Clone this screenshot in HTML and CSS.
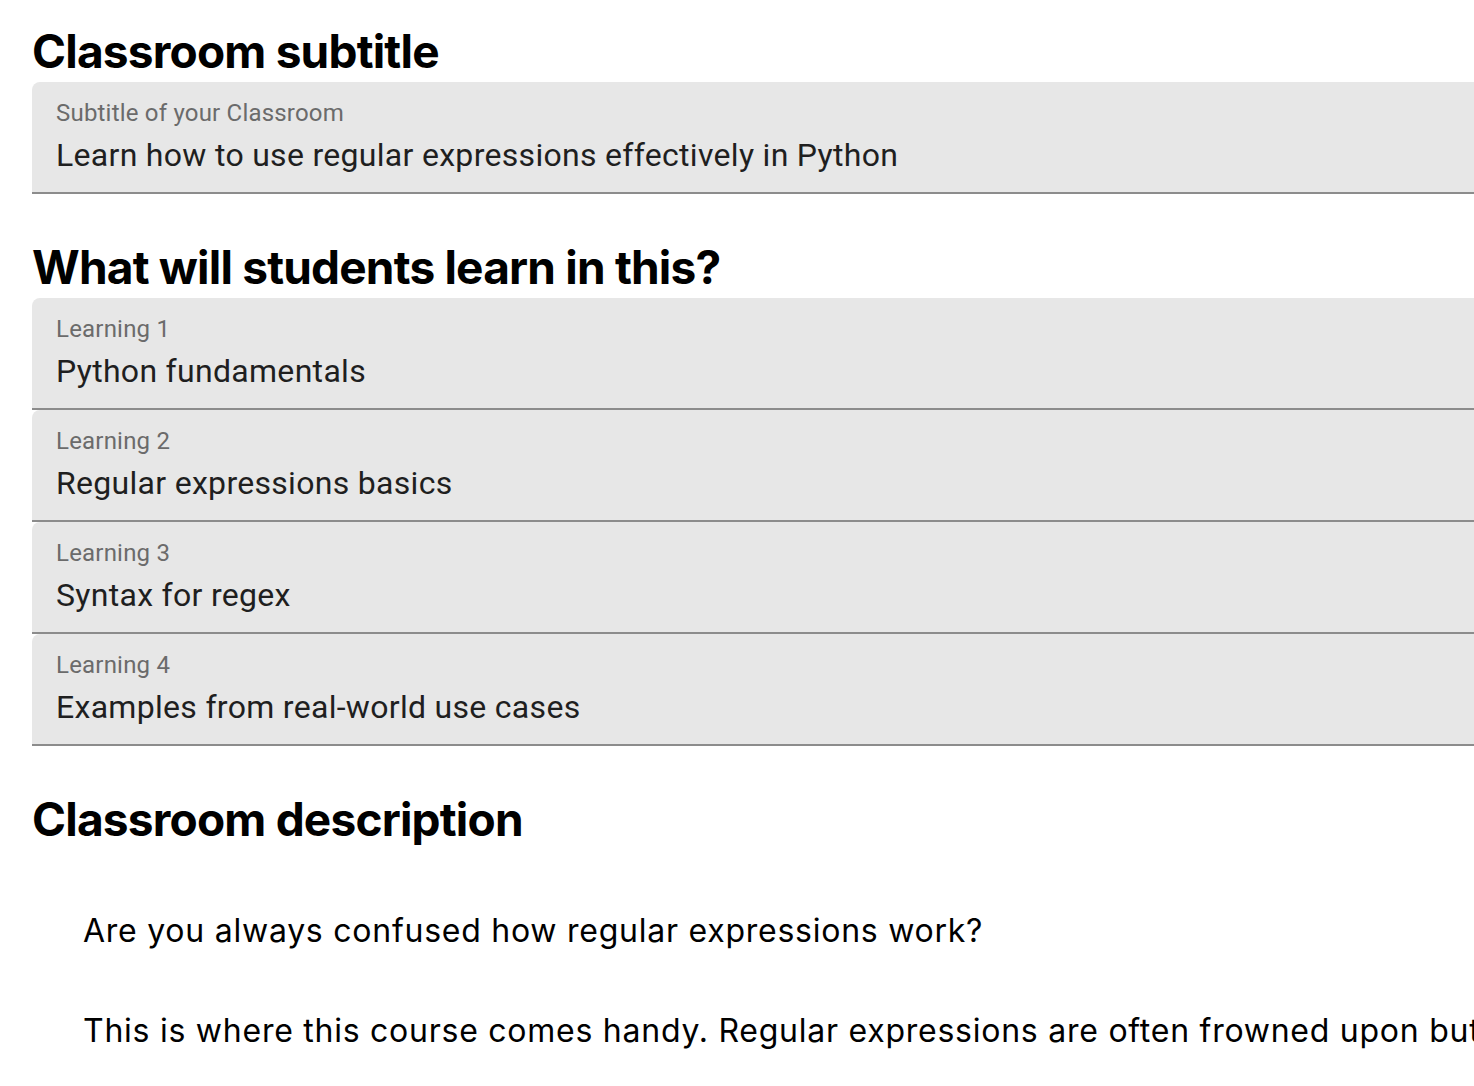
FILE: index.html
```html
<!DOCTYPE html>
<html>
    <head>
        <meta charset="utf-8">
        <title>Classroom settings</title>
        <link rel="stylesheet" href="styles.css">
    </head>
    <body>
        <div class="page">
            <h2 class="section-title first">Classroom subtitle</h2>
            <div class="field">
                <label class="field-label">Subtitle of your Classroom</label>
                <div class="field-value">Learn how to use regular expressions effectively in Python</div>
            </div>

            <h2 class="section-title">What will students learn in this?</h2>
            <div class="field">
                <label class="field-label">Learning 1</label>
                <div class="field-value">Python fundamentals</div>
            </div>
            <div class="field">
                <label class="field-label">Learning 2</label>
                <div class="field-value">Regular expressions basics</div>
            </div>
            <div class="field">
                <label class="field-label">Learning 3</label>
                <div class="field-value">Syntax for regex</div>
            </div>
            <div class="field">
                <label class="field-label">Learning 4</label>
                <div class="field-value">Examples from real-world use cases</div>
            </div>

            <h2 class="section-title">Classroom description</h2>
            <div class="description">
                <p>Are you always confused how regular expressions work?</p>
                <p>This is where this course comes handy. Regular expressions are often frowned upon but they are one of the most useful tools a developer can have.</p>
            </div>
        </div>
    </body>
</html>
```

FILE: styles.css
```css
html {
    overflow-x: hidden;
}
body {
    margin: 0;
    font-family: Inter, "Liberation Sans", sans-serif;
    color: #000;
    background: #fff;
}
.page {
    width: 2800px;
    padding: 22px 32px 0;
}
.section-title {
    margin: 44px 0 2px;
    font-size: 46px;
    line-height: 58px;
    font-weight: 700;
    letter-spacing: -0.8px;
}
.section-title.first {
    margin-top: 0;
}
.field {
    display: flex;
    flex-direction: column;
    background-color: #e7e7e7;
    border-bottom: 2px solid #8c8c8c;
    border-radius: 8px 8px 0 0;
    padding: 14px 24px 14px;
    font-family: Roboto, "Liberation Sans", sans-serif;
}
.field-label {
    font-size: 24px;
    line-height: 34.5px;
    color: #6b6b6b;
    letter-spacing: 0.2px;
}
.field-value {
    margin-top: 1.5px;
    font-size: 32px;
    line-height: 46px;
    color: #1f1f1f;
    letter-spacing: 0.3px;
}
.description {
    padding: 61px 0 0 51px;
}
.description p {
    margin: 0 0 60px;
    font-size: 32px;
    line-height: 40px;
    letter-spacing: 0.75px;
}
```
